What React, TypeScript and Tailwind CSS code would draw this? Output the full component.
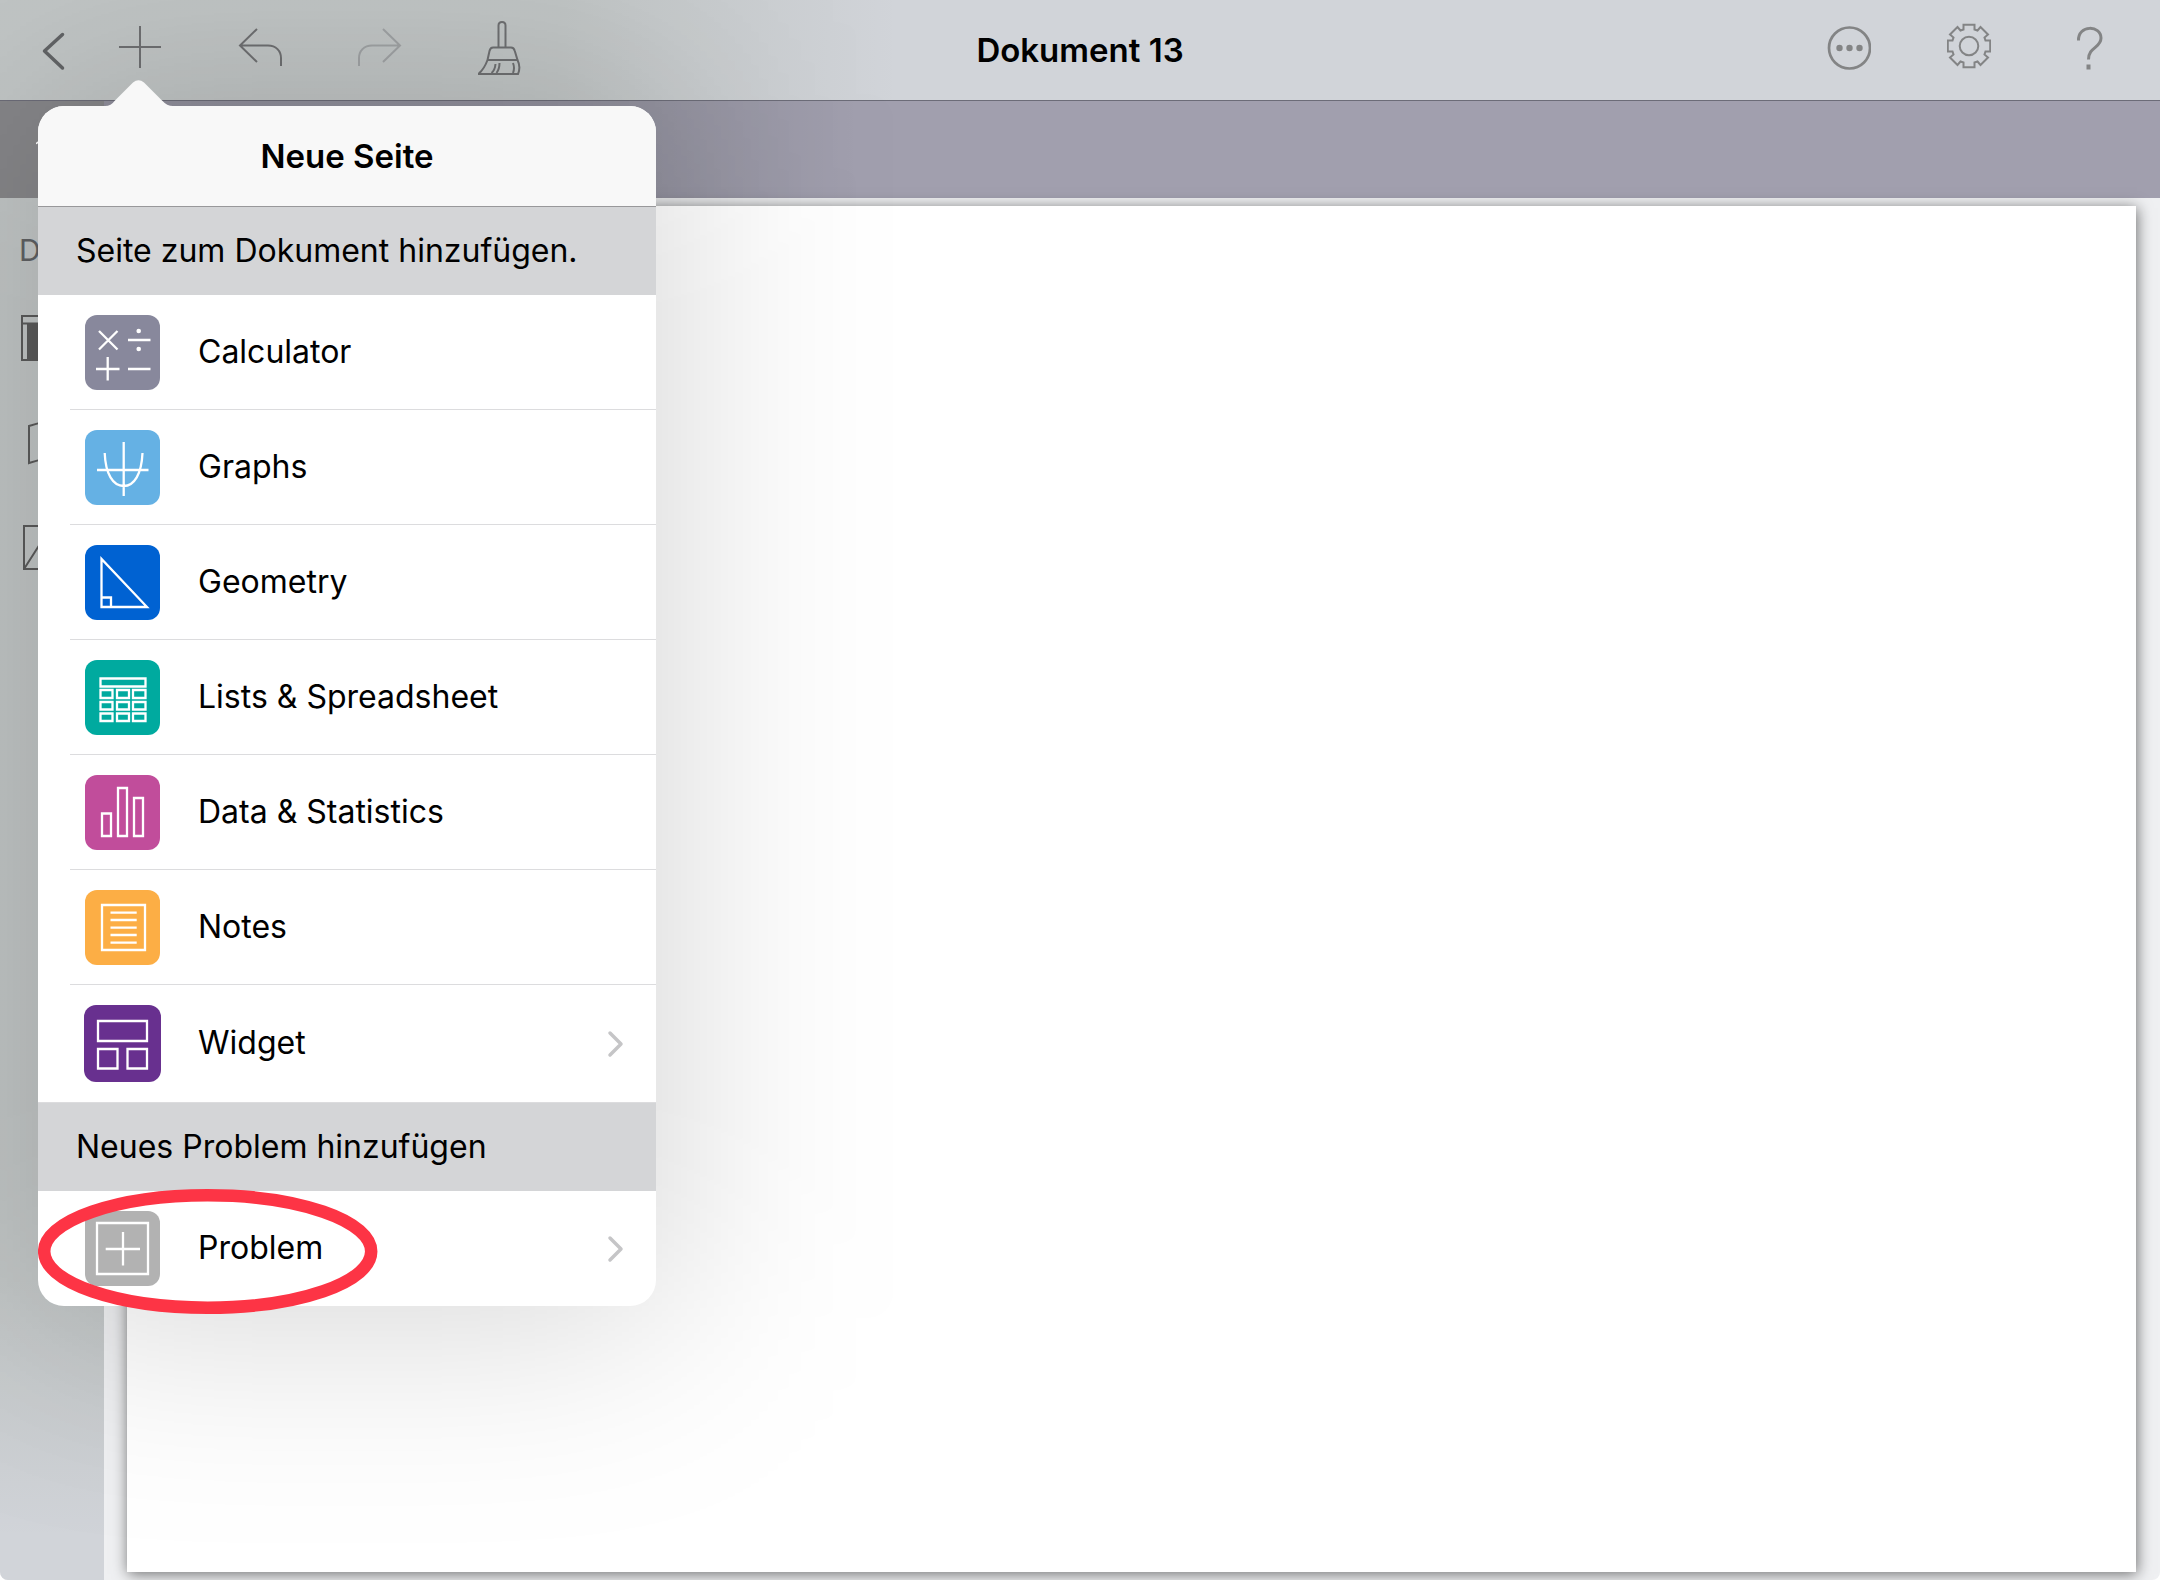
import type { ReactNode } from "react";

function ToolIcon({ children, wide = true }: { children: ReactNode; wide?: boolean }) {
  return (
    <svg
      viewBox={wide ? "0 0 44 60" : "0 0 24 60"}
      className={wide ? "h-[60px] w-11" : "h-[60px] w-6"}
      fill="none"
      stroke="currentColor"
      strokeWidth="2"
      aria-hidden="true"
    >
      {children}
    </svg>
  );
}

function TopBar() {
  return (
    <header className="grid h-[101px] grid-cols-[1fr_auto_1fr] items-center border-b border-[#6c6c78] bg-[#d1d4d9] bg-[linear-gradient(to_right,rgba(60,75,30,0.1),rgba(60,75,30,0.1)_560px,rgba(60,75,30,0)_900px)]">
      <div className="flex items-center gap-[76px] pl-[42px] text-[#6f7072]">
        <div className="flex items-center gap-[52px]">
          <button type="button" aria-label="Zurück" className="text-[#626466]">
            <ToolIcon wide={false}>
              <path d="M20.500 14.500 2.500 31l18 17" strokeWidth="3.500" strokeLinecap="round" strokeLinejoin="round" />
            </ToolIcon>
          </button>
          <button type="button" aria-label="Neue Seite">
            <ToolIcon>
              <path d="M1 27H43M22 6V48" />
            </ToolIcon>
          </button>
        </div>
        <button type="button" aria-label="Rückgängig">
          <ToolIcon>
            <path d="M19 9 2 25.500 19 42M2 25.500H30C38 25.500 43 31 43 38V46" />
          </ToolIcon>
        </button>
        <button type="button" aria-label="Wiederholen" className="text-[#a0a3a5]">
          <ToolIcon>
            <path d="M25 9 42 25.500 25 42M42 25.500H14C6 25.500 1 31 1 38V46" />
          </ToolIcon>
        </button>
        <button type="button" aria-label="Formatieren">
          <ToolIcon>
            <path
              transform="translate(-1 0)"
              d="M21.500 27.500V5.500Q21.500 2 25 2T28.500 5.500V27.500M10.500 40 12.500 31Q13.300 27.500 16 27.500H34Q37 27.500 37.800 31L40.500 40ZM10.500 40Q7.500 48.500 1.500 54H41Q44 47 40.500 40M18.500 44Q18 50 14.500 53M22.500 43Q22.500 49 19.500 53M36 43Q38 48 36 53"
            />
          </ToolIcon>
        </button>
      </div>
      <h1 className="text-[33px] leading-10 font-semibold text-black">Dokument 13</h1>
      <div className="flex items-center justify-end gap-[76px] pr-[49px] text-[#838485]">
        <button type="button" aria-label="Mehr">
          <ToolIcon>
            <circle cx="22.500" cy="28" r="20.500" strokeWidth="2.700" />
            <g fill="currentColor" stroke="none">
              <circle cx="12.500" cy="28" r="3.200" />
              <circle cx="22.500" cy="28" r="3.200" />
              <circle cx="32.500" cy="28" r="3.200" />
            </g>
          </ToolIcon>
        </button>
        <button type="button" aria-label="Einstellungen">
          <ToolIcon>
            <g transform="translate(22 26)">
              <circle r="9.300" />
              <path d="M-5.500-21.200 5.500-21.200 5.500-16.500 8.500-15.500 11.500-19 19-11.500 15.500-8.500 16.500-5.500 21.200-5.500 21.200 5.500 16.500 5.500 15.500 8.500 19 11.500 11.500 19 8.500 15.500 5.500 16.500 5.500 21.200-5.500 21.200-5.500 16.500-8.500 15.500-11.500 19-19 11.500-15.500 8.500-16.500 5.500-21.200 5.500-21.200-5.500-16.500-5.500-15.500-8.500-19-11.500-11.500-19-8.500-15.500-5.500-16.500Z" />
            </g>
          </ToolIcon>
        </button>
        <button type="button" aria-label="Hilfe">
          <ToolIcon>
            <path d="M11.500 20.500C11 4.500 34 5 34 18C34 28 21.500 27 21.500 39.500" strokeWidth="3" />
            <path d="M19.500 44.500h4v5h-4z" fill="currentColor" stroke="none" />
          </ToolIcon>
        </button>
      </div>
    </header>
  );
}

function SideBar() {
  return (
    <aside className="w-[104px] shrink-0 bg-[#d1d4d9] bg-[linear-gradient(to_bottom,rgba(60,75,30,0.1),rgba(60,75,30,0.1)_1080px,rgba(60,75,30,0)_1340px)] pt-8 pl-[19px] text-[#5b5b5b]">
      <div className="h-[85px] text-[30px] leading-10 text-[#606264]">D</div>
      <div className="flex flex-col gap-14">
        <svg viewBox="0 0 50 48" className="h-12 w-[50px]" fill="none" stroke="currentColor" strokeWidth="2" aria-hidden="true">
          <path d="M3 1H47V45H3ZM3 8.500H47" />
          <path d="M8 8h30v37h-30z" fill="currentColor" stroke="none" />
        </svg>
        <svg viewBox="0 0 50 48" className="h-12 w-[50px]" fill="none" stroke="currentColor" strokeWidth="2" aria-hidden="true">
          <path d="M10 7Q19 3.500 28 3.500T46 7V44Q37 40.500 28 40.500T10 44Z" />
        </svg>
        <svg viewBox="0 0 50 48" className="h-12 w-[50px]" fill="none" stroke="currentColor" strokeWidth="2" aria-hidden="true">
          <path d="M5 3H47V46H5ZM5 46 21 21 32 36" />
        </svg>
      </div>
    </aside>
  );
}

type Entry = { label: string; tile: string; more?: boolean; art: ReactNode };

const pages: Entry[] = [
  {
    label: "Calculator",
    tile: "size-[75px] bg-[#88889c]",
    art: (
      <>
        <path d="M14 16 32.500 34.500M32.500 16 14 34.500M43 25H65.500M11 54H34.500M22.700 42V65.500M43 54H65.500" />
        <circle cx="53.700" cy="16" r="2.300" fill="white" stroke="none" />
        <circle cx="53.700" cy="34" r="2.300" fill="white" stroke="none" />
      </>
    ),
  },
  {
    label: "Graphs",
    tile: "size-[75px] bg-[#65b1e4]",
    art: <path d="M12 40H63.500M38.700 12V66M19.700 23C20.500 44 28 56 38.700 56S56.500 44 57.500 23" />,
  },
  {
    label: "Geometry",
    tile: "size-[75px] bg-[#0062d2]",
    art: <path d="M16.500 14V62H62ZM16.500 52.500H26V62" />,
  },
  {
    label: "Lists & Spreadsheet",
    tile: "size-[75px] bg-[#00aa9f]",
    art: (
      <>
        <path d="M15.500 18.500H60.500V26.500H15.500Z" />
        <path d="M15.500 30H27.500V38H15.500ZM32 30H44V38H32ZM48 30H60.500V38H48Z" />
        <path d="M15.500 42H27.500V49.500H15.500ZM32 42H44V49.500H32ZM48 42H60.500V49.500H48Z" />
        <path d="M15.500 53.500H27.500V61H15.500ZM32 53.500H44V61H32ZM48 53.500H60.500V61H48Z" />
      </>
    ),
  },
  {
    label: "Data & Statistics",
    tile: "size-[75px] bg-[#c14d9b]",
    art: <path d="M17 38.500H26V61H17ZM33 13H42V61H33ZM49 23H58V61H49Z" />,
  },
  {
    label: "Notes",
    tile: "size-[75px] bg-[#fcae45]",
    art: <path d="M17 15H60V60H17ZM25.500 22.700H51.700M25.500 30H51.700M25.500 37.700H51.700M25.500 45H51.700M25.500 52.700H51.700" />,
  },
  {
    label: "Widget",
    tile: "size-[77px] bg-[#68308f] -mx-px",
    more: true,
    art: <path d="M14 16H63V36H14ZM14 44H33.500V63.500H14ZM43.500 44H63V63.500H43.500Z" />,
  },
];

const problem: Entry = {
  label: "Problem",
  tile: "size-[75px] bg-[#b2b2b2]",
  more: true,
  art: <path d="M12 12H63V63H12ZM20.700 38H55M38 21V54.500" />,
};

function Row({ entry, last = false }: { entry: Entry; last?: boolean }) {
  const size = entry.label === "Widget" ? 77 : 75;
  return (
    <li className="pl-8">
      <button
        type="button"
        className={
          last
            ? "flex w-full items-center py-5 pr-8 pl-[15px] text-left"
            : "relative flex w-full items-center py-5 pr-8 pl-[15px] text-left after:absolute after:inset-x-0 after:bottom-0 after:h-px after:bg-[#dcdcde]"
        }
      >
        <span className={`${entry.tile} shrink-0 rounded-xl`}>
          <svg viewBox={`0 0 ${size} ${size}`} className="size-full" fill="none" stroke="white" strokeWidth="2.300" aria-hidden="true">
            {entry.art}
          </svg>
        </span>
        <span className="ml-[38px] grow pb-px">{entry.label}</span>
        {entry.more && (
          <svg viewBox="0 0 18 28" className="h-7 w-[18px]" fill="none" stroke="#c5c5c7" strokeWidth="3.500" strokeLinecap="round" strokeLinejoin="round" aria-hidden="true">
            <path d="M4 3 15 14 4 25" />
          </svg>
        )}
      </button>
    </li>
  );
}

function SectionTitle({ children }: { children: ReactNode }) {
  return <h3 className="border-t border-[#98989a] bg-[#d4d5d7] py-6 pl-[38px] leading-10">{children}</h3>;
}

function NewPagePopover() {
  return (
    <div role="dialog" aria-label="Neue Seite" className="absolute top-[106px] left-[38px] w-[618px] text-[32px] leading-10 text-black">
      <div className="absolute -inset-3 rounded-[26px] bg-black/17 blur-[110px]" />
      <div className="relative rounded-[26px] bg-white">
        <svg viewBox="0 0 68 28" className="absolute -top-[27px] left-[67px] h-7 w-[68px]" fill="#f8f8f8" aria-hidden="true">
          <path d="M0 28V27Q6 27 10 21.500L28 3.500Q33.500-1 39 3.500L57 21.500Q62 27 68 27V28Z" />
        </svg>
        <h2 className="rounded-t-[26px] bg-[#f8f8f8] py-[30px] text-center text-[33px] leading-10 font-semibold">Neue Seite</h2>
        <SectionTitle>Seite zum Dokument hinzufügen.</SectionTitle>
        <ul>
          {pages.map((entry, i) => (
            <Row key={entry.label} entry={entry} last={i === pages.length - 1} />
          ))}
        </ul>
        <div className="[&>h3]:border-[#dcdcde]">
          <SectionTitle>Neues Problem hinzufügen</SectionTitle>
        </div>
        <ul>
          <Row entry={problem} last />
        </ul>
        <svg viewBox="0 0 340 125" className="pointer-events-none absolute -bottom-2 left-0 h-[125px] w-[340px]" fill="none" stroke="#fd3445" strokeWidth="12.500" aria-hidden="true">
          <ellipse cx="169.700" cy="62.500" rx="163.500" ry="56.200" />
        </svg>
      </div>
    </div>
  );
}

export default function App() {
  return (
    <div className="relative flex min-h-screen flex-col overflow-hidden rounded-b-lg bg-[#eff0f2] font-['Inter','Liberation_Sans',sans-serif]">
      <TopBar />
      <div className="flex h-[97px] bg-[#a19fae] bg-[linear-gradient(to_right,rgba(0,10,0,0.1),rgba(0,10,0,0.1)_620px,rgba(0,10,0,0)_860px)]">
        <div className="w-[104px] bg-[#868689] pt-10 pl-9">
          <svg viewBox="0 0 4 4" className="size-1" fill="none" stroke="white" strokeWidth="1.500" aria-hidden="true">
            <path d="M0 3Q1 1 4 1" />
          </svg>
        </div>
      </div>
      <div className="flex grow">
        <SideBar />
        <main className="mt-2 mr-6 mb-2 ml-[23px] grow bg-white shadow-[1px_2px_14px_rgba(0,0,0,0.55)]" />
      </div>
      <NewPagePopover />
    </div>
  );
}
